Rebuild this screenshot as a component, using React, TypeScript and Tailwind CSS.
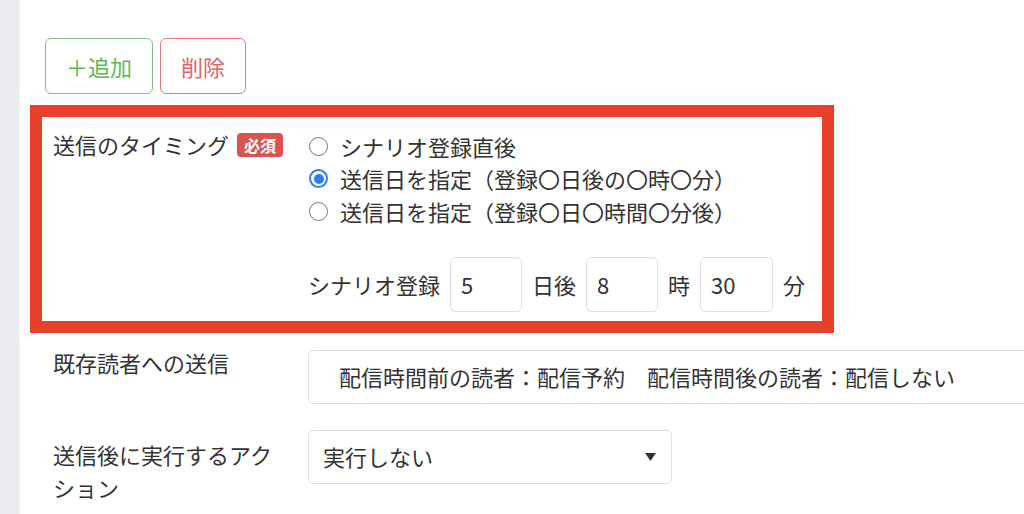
import React from 'react';

const font = { fontFamily: '"Noto Sans CJK JP", "Noto Sans", sans-serif' };

// Radio circle drawn by hand so it matches the reference look
const Radio = ({ checked }: { checked?: boolean }) =>
  checked ? (
    <span className="w-[19px] h-[19px] rounded-full border-2 border-[#2f7cf6] flex items-center justify-center shrink-0">
      <span className="w-[10px] h-[10px] rounded-full bg-[#2f7cf6]" />
    </span>
  ) : (
    <span className="w-[19px] h-[19px] rounded-full border border-[#767676] shrink-0" />
  );

const options = [
  { label: 'シナリオ登録直後', checked: false },
  { label: '送信日を指定（登録〇日後の〇時〇分）', checked: true },
  { label: '送信日を指定（登録〇日〇時間〇分後）', checked: false },
];

const NumBox = ({ value, w }: { value: string; w: string }) => (
  <div className={`${w} h-[55px] border border-[#dcdfe6] rounded-[5px] flex items-center pl-[10px] text-[22px] text-[#333]`}>
    {value}
  </div>
);

export default function App() {
  return (
    <div className="flex w-[1024px] h-[514px] overflow-hidden bg-white text-[22px] text-[#333]" style={font}>
      <div className="w-[20px] shrink-0 bg-[#e9ebee] border-r border-[#f1f2f4]" />
      <div className="flex-1 pl-[10px] pt-[38px]">
        <div className="flex gap-[7px] ml-[15px]">
          <button className="w-[108px] h-[56px] border-[1.5px] border-[#7cc37c] rounded-[6px] text-[#5cb85c] text-[22px] flex items-center justify-center">
            ＋追加
          </button>
          <button className="w-[86px] h-[56px] border-[1.5px] border-[#e27c7c] rounded-[6px] text-[#e06464] text-[22px] flex items-center justify-center">
            削除
          </button>
        </div>

        {/* highlighted timing setting */}
        <div className="mt-[11px] w-[804px] border-[12px] border-[#e8412a] pl-[11px] pt-[13px] pb-[9px] flex">
          <div className="w-[255px] shrink-0 flex items-start leading-[32px] -mt-[2px]">
            <span>送信のタイミング</span>
            <span className="ml-[8px] mt-[5px] h-[24px] px-[7px] rounded-[4px] bg-[#d9534f] text-white text-[16px] font-bold flex items-center leading-none">
              必須
            </span>
          </div>
          <div className="flex flex-col">
            <div className="flex flex-col">
              {options.map((o) => (
                <div key={o.label} className="flex items-center h-[32.5px] pl-[1px]">
                  <Radio checked={o.checked} />
                  <span className="ml-[12px]">{o.label}</span>
                </div>
              ))}
            </div>
            <div className="mt-[29px] flex items-center gap-[10px]">
              <span>シナリオ登録</span>
              <NumBox value="5" w="w-[72px]" />
              <span>日後</span>
              <NumBox value="8" w="w-[72px]" />
              <span>時</span>
              <NumBox value="30" w="w-[73px]" />
              <span>分</span>
            </div>
          </div>
        </div>

        <div className="mt-[17px] ml-[23px] flex">
          <div className="w-[255px] shrink-0 leading-[32px] -mt-[4px]">既存読者への送信</div>
          <div className="w-[760px] shrink-0 h-[54px] border border-[#dcdfe6] rounded-[5px] flex items-center pl-[30px] whitespace-nowrap">
            配信時間前の読者：配信予約　配信時間後の読者：配信しない
          </div>
        </div>

        <div className="mt-[26px] ml-[23px] flex">
          <div className="w-[255px] shrink-0 pt-[8px]">
            <div className="w-[225px] leading-[33px]">送信後に実行するアクション</div>
          </div>
          <div className="w-[364px] shrink-0 h-[54px] border border-[#dcdfe6] rounded-[5px] flex items-center justify-between pl-[14px] pr-[15px]">
            <span>実行しない</span>
            <svg width="11" height="8" viewBox="0 0 11 8">
              <path d="M0 0 H11 L5.5 8 Z" fill="#333" />
            </svg>
          </div>
        </div>
      </div>
    </div>
  );
}
